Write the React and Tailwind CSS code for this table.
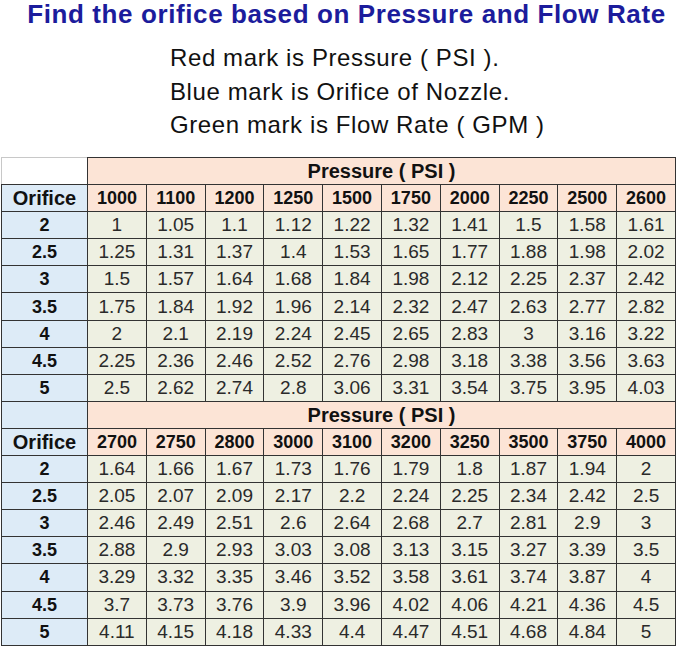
const pressures1 = [1000, 1100, 1200, 1250, 1500, 1750, 2000, 2250, 2500, 2600];
const pressures2 = [2700, 2750, 2800, 3000, 3100, 3200, 3250, 3500, 3750, 4000];
const orifices = ["2", "2.5", "3", "3.5", "4", "4.5", "5"];

const rates1 = [
  ["1", "1.05", "1.1", "1.12", "1.22", "1.32", "1.41", "1.5", "1.58", "1.61"],
  ["1.25", "1.31", "1.37", "1.4", "1.53", "1.65", "1.77", "1.88", "1.98", "2.02"],
  ["1.5", "1.57", "1.64", "1.68", "1.84", "1.98", "2.12", "2.25", "2.37", "2.42"],
  ["1.75", "1.84", "1.92", "1.96", "2.14", "2.32", "2.47", "2.63", "2.77", "2.82"],
  ["2", "2.1", "2.19", "2.24", "2.45", "2.65", "2.83", "3", "3.16", "3.22"],
  ["2.25", "2.36", "2.46", "2.52", "2.76", "2.98", "3.18", "3.38", "3.56", "3.63"],
  ["2.5", "2.62", "2.74", "2.8", "3.06", "3.31", "3.54", "3.75", "3.95", "4.03"],
];

const rates2 = [
  ["1.64", "1.66", "1.67", "1.73", "1.76", "1.79", "1.8", "1.87", "1.94", "2"],
  ["2.05", "2.07", "2.09", "2.17", "2.2", "2.24", "2.25", "2.34", "2.42", "2.5"],
  ["2.46", "2.49", "2.51", "2.6", "2.64", "2.68", "2.7", "2.81", "2.9", "3"],
  ["2.88", "2.9", "2.93", "3.03", "3.08", "3.13", "3.15", "3.27", "3.39", "3.5"],
  ["3.29", "3.32", "3.35", "3.46", "3.52", "3.58", "3.61", "3.74", "3.87", "4"],
  ["3.7", "3.73", "3.76", "3.9", "3.96", "4.02", "4.06", "4.21", "4.36", "4.5"],
  ["4.11", "4.15", "4.18", "4.33", "4.4", "4.47", "4.51", "4.68", "4.84", "5"],
];

const cell = "border border-[#333] h-[27.1px] p-0 leading-[22px] text-center";

const Block = ({ pressures, rates, first }) => (
  <>
    <tr>
      <td
        className={
          first
            ? "h-[27.1px] p-0 bg-white border border-[#c8c8c8] border-b-[#333] border-r-[#333]"
            : cell + " bg-[#ddebf7]"
        }
      ></td>
      <td
        colSpan={10}
        className={cell + " bg-[#fce4d6] text-[20px] font-bold text-[#111]"}
      >
        Pressure ( PSI )
      </td>
    </tr>
    <tr>
      <td className={cell + " bg-[#ddebf7] text-[20px] font-bold text-[#111]"}>
        Orifice
      </td>
      {pressures.map((p) => (
        <td key={p} className={cell + " bg-[#fce4d6] text-[18px] font-bold text-[#111]"}>
          {p}
        </td>
      ))}
    </tr>
    {rates.map((row, i) => (
      <tr key={i}>
        <td className={cell + " bg-[#ddebf7] text-[18px] font-bold text-[#111]"}>
          {orifices[i]}
        </td>
        {row.map((v, j) => (
          <td key={j} className={cell + " bg-[#eef0e2] text-[19px] text-[#2a2a2a]"}>
            {v}
          </td>
        ))}
      </tr>
    ))}
  </>
);

const App = () => {
  return (
    <div className="w-[679px] h-[648px] bg-white overflow-hidden font-['Liberation_Sans',Arial,sans-serif]">
      <h1 className="text-center text-[26px] leading-[28px] tracking-[0.6px] font-bold text-[#1c1c9c] pl-[14px] whitespace-nowrap">
        Find the orifice based on Pressure and Flow Rate
      </h1>
      <div className="mt-[13px] pl-[170px] text-[24px] leading-[33.5px] tracking-[0.6px] text-[#111]">
        <p>Red mark is Pressure ( PSI ).</p>
        <p>Blue mark is Orifice of Nozzle.</p>
        <p>Green mark is Flow Rate ( GPM )</p>
      </div>
      <table className="mt-[15.5px] ml-[1px] w-[675px] border-collapse table-fixed">
        <colgroup>
          <col className="w-[86px]" />
          {pressures1.map((p) => (
            <col key={p} />
          ))}
        </colgroup>
        <tbody>
          <Block pressures={pressures1} rates={rates1} first />
          <Block pressures={pressures2} rates={rates2} />
        </tbody>
      </table>
    </div>
  );
};

export default App;
